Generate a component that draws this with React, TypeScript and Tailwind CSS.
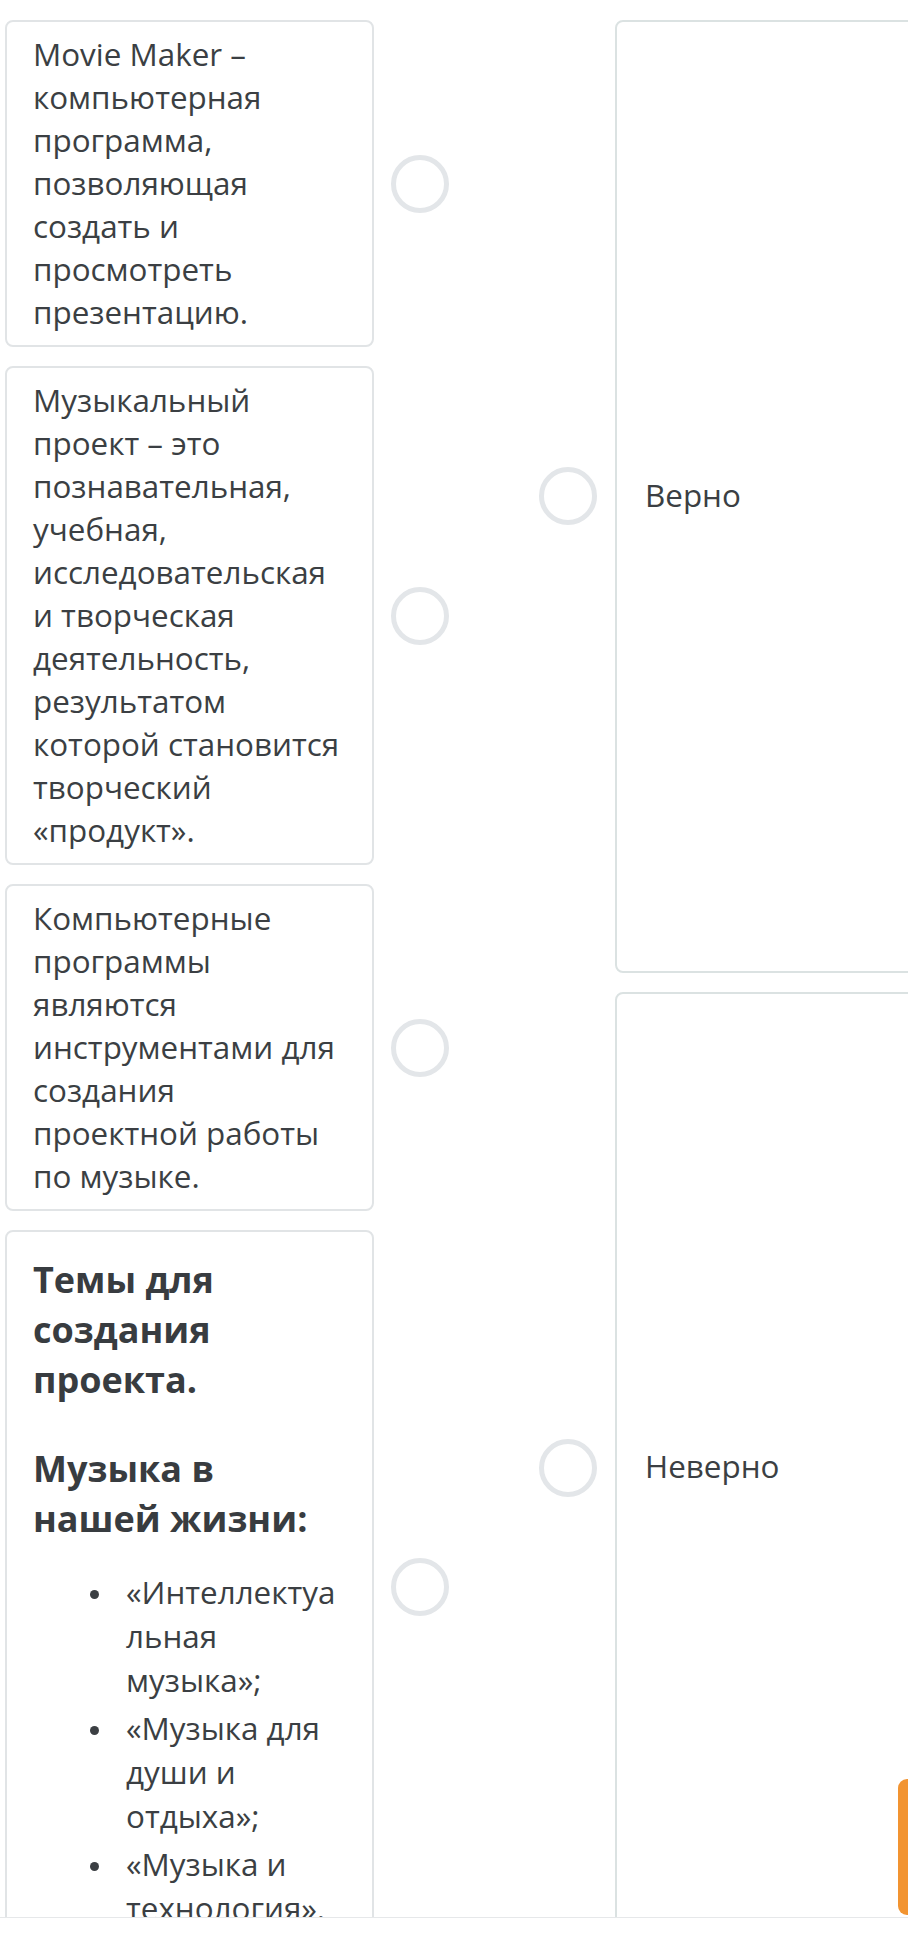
import React from 'react'

type Item = { id: number; body: React.ReactNode }

const textCls = "text-[31.4px] leading-[43px] text-[#3b3f43]"

function Radio() {
    return <div className='w-[58px] h-[58px] shrink-0 rounded-full border-[5px] border-[#e3e6e9] bg-white'></div>
}

function Bullet({ children }: { children: React.ReactNode }) {
    return (
        <li className='flex'>
            <div className='w-[93px] shrink-0'>
                <div className='ml-[57px] mt-[20px] w-[9px] h-[9px] rounded-full bg-[#3b3f43]'></div>
            </div>
            <div className='flex-1 min-w-0 break-words text-[31.4px] leading-[44px] text-[#3b3f43]'>{children}</div>
        </li>
    )
}

const items: Item[] = [
    { id: 1, body: <p className={textCls}>Movie Maker – компьютерная программа, позволяющая создать и просмотреть презентацию.</p> },
    { id: 2, body: <p className={textCls}>Музыкальный проект – это познавательная, учебная, исследовательская и творческая деятельность, результатом которой становится творческий «продукт».</p> },
    { id: 3, body: <p className={textCls}>Компьютерные программы являются инструментами для создания проектной работы по музыке.</p> },
    {
        id: 4, body: <>
            <p className='mt-[13px] text-[36px] leading-[50px] font-bold text-[#383c40]'>Темы для создания проекта.</p>
            <p className='mt-[39px] text-[36px] leading-[50px] font-bold text-[#383c40]'>Музыка в нашей жизни:</p>
            <ul className='mt-[26px] flex flex-col gap-[4px]'>
                <Bullet>«Интеллектуальная музыка»;</Bullet>
                <Bullet>«Музыка для души и отдыха»;</Bullet>
                <Bullet>«Музыка и технология».</Bullet>
            </ul>
        </>
    },
]

const answers = ['Верно', 'Неверно']

export default function App() {
    return (
        <div className='relative w-[908px] h-[1944px] overflow-hidden bg-white' style={{ fontFamily: '"Open Sans", "Noto Sans", sans-serif' }}>
            <div className='flex items-stretch pt-[20px] pl-[5px]'>
                {/* left column: statements */}
                <div className='flex flex-col gap-[19px] shrink-0'>
                    {items.map((item) => (
                        <div key={item.id} className='flex items-center'>
                            <div className='w-[369px] shrink-0 rounded-lg border-2 border-[#e1e4e6] pl-[26px] pr-[25px] pt-[10px] pb-[12px]'>
                                {item.body}
                            </div>
                            <div className='ml-[17px]'><Radio /></div>
                        </div>
                    ))}
                </div>
                {/* right column: categories */}
                <div className='ml-[90px] flex flex-col gap-[19px] shrink-0'>
                    {answers.map((a) => (
                        <div key={a} className='flex-1 flex items-center'>
                            <Radio />
                            <div className='ml-[18px] self-stretch w-[420px] flex items-center rounded-lg border-2 border-[#dbe2e2] pl-[28px] pb-[4px]'>
                                <span className={textCls}>{a}</span>
                            </div>
                        </div>
                    ))}
                </div>
            </div>
            <div className='absolute left-[898px] top-[1779px] w-[30px] h-[136px] rounded-l-[9px] bg-[#f29431]'></div>
            <div className='absolute left-0 right-0 bottom-0 h-[27px] bg-white border-t border-[#e6e8ea]'></div>
        </div>
    )
}
